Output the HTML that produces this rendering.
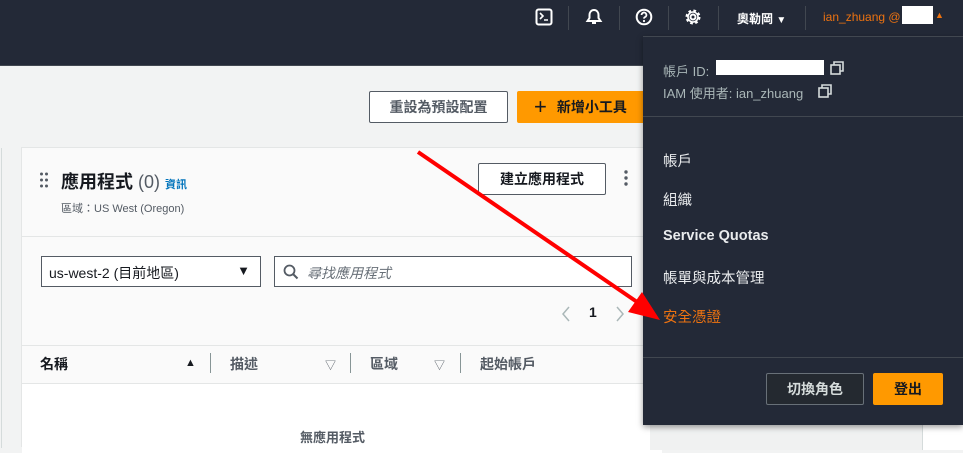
<!DOCTYPE html>
<html><head><meta charset="utf-8">
<style>
*{box-sizing:border-box;margin:0;padding:0}
body{width:963px;height:444px;overflow:hidden;position:relative;background:#f2f3f3;font-family:"Liberation Sans","Noto Sans CJK TC",sans-serif;color:#16191f}
.abs{position:absolute}
.nav{left:0;top:0;width:963px;height:66px;background:#232937;border-bottom:1px solid #414750}
.sep{width:1px;height:24px;background:#414750;top:6px}
.ic{top:8px;width:18px;height:18px;color:#fff}
.btn{border:1px solid #545b64;background:#fff;font-size:14px;font-weight:bold;display:flex;align-items:center;justify-content:center;border-radius:2px}
.card{left:21px;top:147px;width:640px;height:300px;background:#fafafa;border:1px solid #e4e6e6}
.panel{left:643px;top:36px;width:320px;height:389px;background:#232937;box-shadow:0 2px 6px rgba(0,0,0,.4);border-top:1px solid #414750}
.mi{left:20px;font-size:14.5px;color:#e9ebed;font-weight:normal}
</style></head><body>
<div class="abs nav"></div>
<svg class="abs ic" style="left:535px" viewBox="0 0 18 18"><rect x="1.5" y="1.5" width="15" height="15" rx="2" fill="none" stroke="#fff" stroke-width="2"/><path d="M5 5l3 3-3 3M9 12h4" fill="none" stroke="#fff" stroke-width="1.6"/></svg>
<div class="abs sep" style="left:568px"></div>
<svg class="abs ic" style="left:585px" viewBox="0 0 18 18"><path d="M9 2c-3 0-4.5 2.5-4.5 5v3L2.5 13h13l-2-3V7c0-2.5-1.5-5-4.5-5zM7 15h4" fill="none" stroke="#fff" stroke-width="2"/></svg>
<div class="abs sep" style="left:619px"></div>
<svg class="abs ic" style="left:635px" viewBox="0 0 18 18"><circle cx="9" cy="9" r="7.3" fill="none" stroke="#fff" stroke-width="2"/><path d="M6.6 7a2.4 2.4 0 1 1 3.2 2.2c-.6.3-.8.7-.8 1.4" fill="none" stroke="#fff" stroke-width="1.8"/><circle cx="9" cy="13" r="1.1" fill="#fff"/></svg>
<div class="abs sep" style="left:668px"></div>
<svg class="abs ic" style="left:684px" viewBox="0 0 18 18"><circle cx="9" cy="9" r="2.5" fill="none" stroke="#fff" stroke-width="2"/><circle cx="9" cy="9" r="6.2" fill="none" stroke="#fff" stroke-width="2.6" stroke-dasharray="2.6 2.3"/><circle cx="9" cy="9" r="5" fill="none" stroke="#fff" stroke-width="1.6"/></svg>
<div class="abs sep" style="left:718px"></div>
<div class="abs" style="left:737px;top:10px;font-size:12px;font-weight:bold;color:#fff">奧勒岡 <span style="font-size:10px">▼</span></div>
<div class="abs sep" style="left:805px"></div>
<div class="abs" style="left:823px;top:10px;font-size:12px;color:#ec7211">ian_zhuang @</div>
<div class="abs" style="left:902px;top:6px;width:31px;height:18px;background:#fff"></div>
<div class="abs" style="left:935px;top:10px;font-size:9px;color:#ec7211">▲</div>

<div class="abs btn" style="left:369px;top:91px;width:139px;height:32px;color:#545b64">重設為預設配置</div>
<div class="abs btn" style="left:517px;top:91px;width:130px;height:32px;background:#ff9900;border-color:#ff9900;color:#16191f;justify-content:flex-start;padding-left:16px"><span style="font-size:22px;font-weight:normal;margin-right:10px;line-height:1">+</span>新增小工具</div>

<div class="abs" style="left:0;top:148px;width:2px;height:300px;border-right:1px solid #d5dbdb"></div>
<div class="abs card">
  <svg class="abs" style="left:18px;top:24px" width="8" height="16" viewBox="0 0 8 16"><g fill="#545b64"><circle cx="1.5" cy="2" r="1.5"/><circle cx="6.5" cy="2" r="1.5"/><circle cx="1.5" cy="8" r="1.5"/><circle cx="6.5" cy="8" r="1.5"/><circle cx="1.5" cy="14" r="1.5"/><circle cx="6.5" cy="14" r="1.5"/></g></svg>
  <div class="abs" style="left:39px;top:20px;font-size:18px;font-weight:bold">應用程式 <span style="font-weight:normal;color:#545b64">(0)</span> <span style="font-size:11px;color:#0073bb">資訊</span></div>
  <div class="abs" style="left:39px;top:52px;font-size:11px;color:#545b64">區域：US West (Oregon)</div>
  <div class="abs btn" style="left:456px;top:15px;width:128px;height:32px;color:#16191f">建立應用程式</div>
  <svg class="abs" style="left:602px;top:22px" width="4" height="16" viewBox="0 0 4 16"><g fill="#545b64"><circle cx="2" cy="2" r="1.7"/><circle cx="2" cy="8" r="1.7"/><circle cx="2" cy="14" r="1.7"/></g></svg>
  <div class="abs" style="left:0;top:88px;width:640px;height:1px;background:#e4e6e6"></div>
  <div class="abs" style="left:19px;top:108px;width:220px;height:31px;border:1px solid #545b64;background:#fff;font-size:14px;padding:6px 7px">us-west-2 (目前地區)<span style="position:absolute;right:10px;top:6px;font-size:13px">▼</span></div>
  <div class="abs" style="left:252px;top:108px;width:358px;height:31px;border:1px solid #545b64;background:#fff;font-size:14px;padding:6px 32px;font-style:italic;color:#687078">尋找應用程式
    <svg style="position:absolute;left:8px;top:7px" width="16" height="16" viewBox="0 0 16 16"><circle cx="6.5" cy="6.5" r="5" fill="none" stroke="#545b64" stroke-width="1.8"/><path d="M10 10l4.5 4.5" stroke="#545b64" stroke-width="2"/></svg></div>
  <svg class="abs" style="left:540px;top:158px" width="8" height="16" viewBox="0 0 8 16"><path d="M7 1L1 8l6 7" fill="none" stroke="#aab7b8" stroke-width="1.5"/></svg>
  <div class="abs" style="left:567px;top:156px;font-size:14px;font-weight:bold">1</div>
  <svg class="abs" style="left:594px;top:158px" width="8" height="16" viewBox="0 0 8 16"><path d="M1 1l6 7-6 7" fill="none" stroke="#aab7b8" stroke-width="1.5"/></svg>
  <div class="abs" style="left:0;top:197px;width:640px;height:1px;background:#e4e6e6"></div>
  <div class="abs" style="left:18px;top:206px;font-size:14px;font-weight:bold;color:#16191f">名稱</div>
  <div class="abs" style="left:163px;top:209px;font-size:11px">▲</div>
  <div class="abs" style="left:188px;top:205px;width:1px;height:20px;background:#879596"></div>
  <div class="abs" style="left:208px;top:206px;font-size:14px;font-weight:bold;color:#545b64">描述</div>
  <div class="abs" style="left:303px;top:209px;font-size:11px;color:#545b64">▽</div>
  <div class="abs" style="left:328px;top:205px;width:1px;height:20px;background:#879596"></div>
  <div class="abs" style="left:348px;top:206px;font-size:14px;font-weight:bold;color:#545b64">區域</div>
  <div class="abs" style="left:412px;top:209px;font-size:11px;color:#545b64">▽</div>
  <div class="abs" style="left:438px;top:205px;width:1px;height:20px;background:#879596"></div>
  <div class="abs" style="left:458px;top:206px;font-size:14px;font-weight:bold;color:#545b64">起始帳戶</div>
  <div class="abs" style="left:0;top:235px;width:640px;height:70px;background:#fff;border-top:1px solid #e4e6e6"></div>
  <div class="abs" style="left:278px;top:279px;font-size:13px;font-weight:bold;color:#545b64">無應用程式</div>
</div>
<div class="abs" style="left:650px;top:420px;width:273px;height:30px;background:#f0f1f1;border-right:1px solid #d5dbdb"></div>
<div class="abs" style="left:923px;top:420px;width:40px;height:30px;background:#fff"></div>

<div class="abs panel">
  <div class="abs" style="left:20px;top:24px;font-size:13px;color:#aab7b8">帳戶 ID:</div>
  <div class="abs" style="left:73px;top:23px;width:108px;height:15px;background:#fff"></div>
  <svg class="abs" style="left:187px;top:24px" width="14" height="14" viewBox="0 0 14 14"><rect x="1" y="4" width="9" height="9" fill="none" stroke="#d5dbdb" stroke-width="1.6"/><path d="M4 4V1h9v9h-3" fill="none" stroke="#d5dbdb" stroke-width="1.6"/></svg>
  <div class="abs" style="left:20px;top:46px;font-size:13px;color:#aab7b8">IAM 使用者: ian_zhuang</div>
  <svg class="abs" style="left:175px;top:47px" width="14" height="14" viewBox="0 0 14 14"><rect x="1" y="4" width="9" height="9" fill="none" stroke="#d5dbdb" stroke-width="1.6"/><path d="M4 4V1h9v9h-3" fill="none" stroke="#d5dbdb" stroke-width="1.6"/></svg>
  <div class="abs" style="left:0;top:79px;width:320px;height:1px;background:#414750"></div>
  <div class="abs mi" style="top:113px">帳戶</div>
  <div class="abs mi" style="top:152px">組織</div>
  <div class="abs mi" style="top:191px;font-weight:bold">Service Quotas</div>
  <div class="abs mi" style="top:230px">帳單與成本管理</div>
  <div class="abs mi" style="top:269px;color:#ec7211">安全憑證</div>
  <div class="abs" style="left:0;top:320px;width:320px;height:1px;background:#414750"></div>
  <div class="abs btn" style="left:123px;top:336px;width:98px;height:32px;background:#242930;border-color:#687078;color:#d5dbdb">切換角色</div>
  <div class="abs btn" style="left:230px;top:336px;width:70px;height:32px;background:#ff9900;border-color:#ff9900;color:#16191f">登出</div>
</div>

<svg class="abs" style="left:0;top:0" width="963" height="444"><line x1="418" y1="152" x2="640" y2="304" stroke="#f00" stroke-width="4"/><polygon points="660,320 628,312 642,292" fill="#f00"/></svg>
</body></html>
